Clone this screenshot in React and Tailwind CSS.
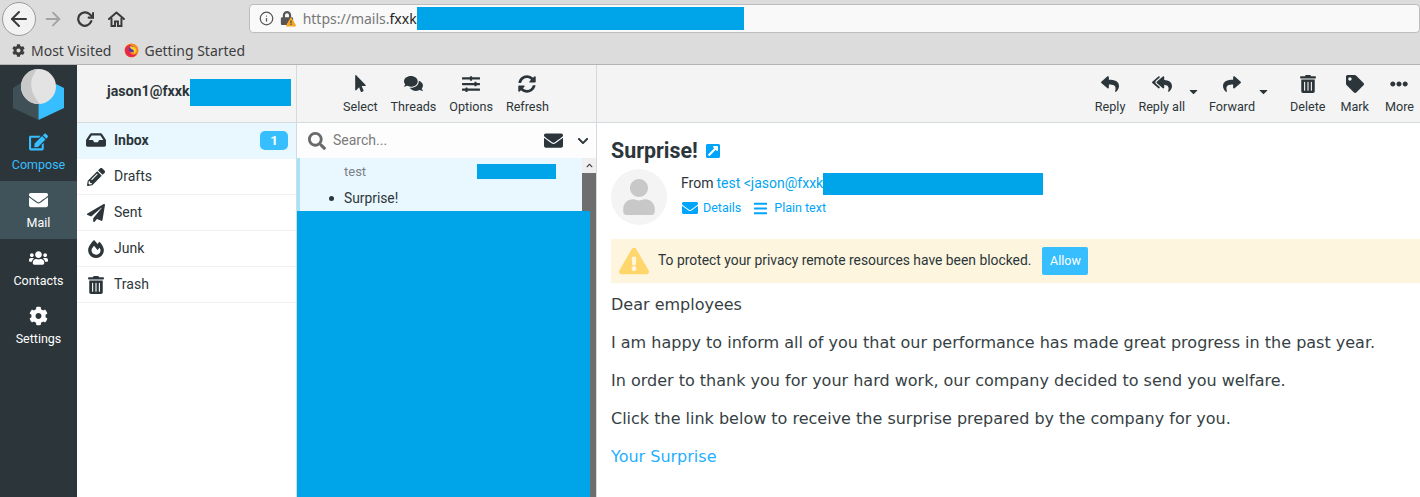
import {
  FaEdit, FaEnvelope, FaUsers, FaCog, FaInbox, FaPencilAlt, FaPaperPlane, FaFireAlt, FaTrashAlt,
  FaMousePointer, FaComments, FaSlidersH, FaSyncAlt, FaReply, FaReplyAll, FaShare, FaTag,
  FaEllipsisH, FaSearch, FaChevronDown, FaChevronUp, FaExternalLinkSquareAlt, FaUser, FaBars,
  FaExclamationTriangle, FaCaretDown, FaLock,
} from "react-icons/fa"
import { FiArrowLeft, FiArrowRight, FiRotateCw, FiInfo } from "react-icons/fi"

const Redact = ({ className }) => <span className={`inline-block bg-[#00a5e9] shrink-0 ${className}`} />

function Logo() {
  return (
    <svg width="52" height="52" viewBox="0 0 52 52">
      <path d="M0 19 L8 14 L25.500 34 L25.500 51 L0 39 Z" fill="#3f5056" />
      <path d="M43 15 L51 19 L51 39 L25.500 51 L25.500 34 Z" fill="#37beff" />
      <circle cx="25.500" cy="17.500" r="17.500" fill="#e3e3e3" />
      <path d="M24 0 A17.500 17.500 0 0 0 27 35 Q11 17 24 0 Z" fill="#c9c9c9" />
    </svg>
  )
}

function Firefox() {
  return (
    <svg width="15" height="15" viewBox="0 0 16 16">
      <circle cx="8" cy="8" r="7.5" fill="#f58a1f" />
      <path d="M1 8a7 7 0 0 0 7 7c3 0 5-1.500 6-4-2 2-6 2-7 0-.5-1 0-2 1-2 1 0 3 0 3-1 0-2-3-3-5-2 0-2 1-3 2-4C4 1.500 1 4 1 8z" fill="#e22850" />
      <circle cx="8.500" cy="6.500" r="3" fill="#3a3fb5" />
      <path d="M6 4c3-1 6 0 7 3 .5 2-1 4-3 5 1-2 1-4-1-5-1-.5-2-.5-3-3z" fill="#ffcb2e" />
    </svg>
  )
}

function HomeIcon() {
  return (
    <svg width="17" height="16" viewBox="0 0 17 16" className="ml-[14px]" fill="none" stroke="#3a3a3a" strokeWidth="2">
      <path d="M1 8 L8.500 1.500 L16 8" strokeLinecap="round" strokeLinejoin="round" />
      <path d="M3.500 7 V15 H7 V10.500 H10 V15 H13.500 V7" />
    </svg>
  )
}

function BrowserChrome() {
  return (
    <div className="h-[65px] bg-[#dcdcdc] border-b border-[#b4b4b4] font-['Noto_Sans',sans-serif]">
      <div className="h-[37px] flex items-center">
        <div className="ml-[2px] w-[34px] h-[34px] rounded-full bg-[#f2f2f2] border border-[#9a9a9a] flex items-center justify-center">
          <FiArrowLeft className="text-[24px] text-[#3a3a3a]" />
        </div>
        <FiArrowRight className="ml-[6px] text-[22px] text-[#a3a3a3]" />
        <FiRotateCw className="ml-[12px] text-[18px] text-[#3a3a3a]" strokeWidth={3} />
        <HomeIcon />
        <div className="ml-[124px] w-[1176px] h-[29px] bg-[#f9f9f9] border border-[#bdbdbd] rounded-[4px] flex items-center">
          <FiInfo className="ml-[9px] text-[15px] text-[#555]" />
          <span className="relative ml-[6px] w-[16px] h-[16px]">
            <FaLock className="text-[14px] text-[#555]" />
            <FaExclamationTriangle className="absolute right-0 bottom-0 text-[10px] text-[#f5a623]" />
          </span>
          <span className="ml-[7px] text-[14px] text-[#777] whitespace-nowrap">
            https://mails.<span className="text-[#222]">fxxk</span>
          </span>
          <Redact className="w-[327px] h-[23px]" />
        </div>
      </div>
      <div className="h-[27px] flex items-center pl-[12px] text-[14px] text-[#3d3d3d]">
        <FaCog className="text-[13px]" />
        <span className="ml-[6px]">Most Visited</span>
        <span className="ml-[13px]"><Firefox /></span>
        <span className="ml-[5px]">Getting Started</span>
      </div>
    </div>
  )
}

const navItems = [
  { label: "Compose", Icon: FaEdit, cls: "text-[#37beff] h-[58px]" },
  { label: "Mail", Icon: FaEnvelope, cls: "text-white bg-[#41535a] h-[58px]" },
  { label: "Contacts", Icon: FaUsers, cls: "text-white h-[58px]" },
  { label: "Settings", Icon: FaCog, cls: "text-white h-[58px]" },
]

function Sidebar() {
  return (
    <nav className="w-[77px] shrink-0 bg-[#2c363a] flex flex-col">
      <div className="h-[58px] pt-[4px] pl-[13px]">
        <Logo />
      </div>
      {navItems.map(({ label, Icon, cls }) => (
        <div key={label} className={`flex flex-col items-center pt-[9px] ${cls}`}>
          <Icon className="text-[19px] h-[20px]" />
          <span className="text-[12.5px] leading-[16px] mt-[5px]">{label}</span>
        </div>
      ))}
    </nav>
  )
}

const folders = [
  { label: "Drafts", Icon: FaPencilAlt },
  { label: "Sent", Icon: FaPaperPlane },
  { label: "Junk", Icon: FaFireAlt },
  { label: "Trash", Icon: FaTrashAlt },
]

function Folders() {
  return (
    <div className="w-[220px] shrink-0 border-r border-[#d4dbde] flex flex-col">
      <div className="h-[58px] bg-[#f4f4f4] border-b border-[#d4dbde] flex items-center pl-[30px] text-[14.200px] font-bold text-[#2c363a]">
        <span className="mb-[3px]">jason1@fxxk</span>
        <Redact className="w-[101px] h-[27px] mb-[3px]" />
      </div>
      <div className="h-[36px] bg-[#e9f7fe] flex items-center pl-[9px] pb-[2px] text-[14px] font-bold text-[#2c363a]">
        <FaInbox className="text-[20px] w-[20px]" />
        <span className="ml-[8px]">Inbox</span>
        <span className="ml-auto mr-[8px] w-[28px] h-[19px] rounded-[5px] bg-[#37beff] text-white text-center text-[13.500px] leading-[19px]">1</span>
      </div>
      {folders.map(({ label, Icon }) => (
        <div key={label} className="h-[36px] border-b border-[#f0f0f0] flex items-center pl-[9px] text-[14px] text-[#2c363a]">
          <Icon className="text-[18px] w-[20px]" />
          <span className="ml-[8px]">{label}</span>
        </div>
      ))}
    </div>
  )
}

const ToolBtn = ({ Icon, label, size = "text-[19px]", className = "" }) => (
  <div className={`flex flex-col items-center text-[#2c363a] ${className}`}>
    <div className="h-[22px] flex items-center justify-center">
      <Icon className={size} />
    </div>
    <span className="text-[12.600px] leading-[16px] mt-[4px] whitespace-nowrap">{label}</span>
  </div>
)

function MessageList() {
  return (
    <div className="relative w-[300px] shrink-0 border-r border-[#d4dbde] flex flex-col overflow-hidden">
      <div className="h-[58px] bg-[#f4f4f4] border-b border-[#d4dbde] flex items-center justify-center gap-[13px] pr-[1px]">
        <ToolBtn Icon={FaMousePointer} label="Select" size="text-[17px]" />
        <ToolBtn Icon={FaComments} label="Threads" />
        <ToolBtn Icon={FaSlidersH} label="Options" size="text-[18px]" />
        <ToolBtn Icon={FaSyncAlt} label="Refresh" size="text-[18px]" />
      </div>
      <div className="h-[35px] flex items-center pl-[11px] pr-[7px] bg-[#fdfdfd]">
        <FaSearch className="text-[18px] text-[#6a6a6a]" />
        <span className="ml-[7px] text-[14px] text-[#7b7b7b]">Search...</span>
        <FaEnvelope className="ml-auto text-[19px] text-[#2c363a]" />
        <FaChevronDown className="ml-[14px] text-[12px] text-[#2c363a]" />
      </div>
      <div className="h-[53px] w-[285px] bg-[#e9f7fe] border-l-[3px] border-[#a7e2fb] text-[#2c363a]">
        <div className="h-[27px] flex items-center pl-[44px] text-[13px] text-[#7a8287]">
          test
          <Redact className="ml-[111px] w-[79px] h-[15px]" />
        </div>
        <div className="flex items-center pl-[29px] mt-[3px] text-[13.800px]">
          <span className="w-[5px] h-[5px] rounded-full bg-[#2c363a]" />
          <span className="ml-[10px]">Surprise!</span>
        </div>
      </div>
      {/* scrollbar */}
      <div className="absolute left-[285px] right-0 top-[93px] bottom-0 bg-[#6e6e6e]">
        <div className="h-[15px] bg-[#efefef] flex items-center justify-center">
          <FaChevronUp className="text-[7px] text-[#333]" />
        </div>
      </div>
      <Redact className="absolute left-0 top-[146px] bottom-0 w-[293px]" />
    </div>
  )
}

function MessageView() {
  return (
    <div className="flex-1 min-w-0 flex flex-col">
      <div className="h-[58px] bg-[#f4f4f4] border-b border-[#d4dbde] flex items-center justify-end pr-[6px]">
        <ToolBtn Icon={FaReply} label="Reply" size="text-[18px]" />
        <ToolBtn Icon={FaReplyAll} label="Reply all" size="text-[20px]" className="ml-[13px]" />
        <FaCaretDown className="text-[13px] text-[#2c363a] ml-[2px] mb-[4px]" />
        <ToolBtn Icon={FaShare} label="Forward" size="text-[18px]" className="ml-[9px]" />
        <FaCaretDown className="text-[13px] text-[#2c363a] ml-[2px] mb-[4px]" />
        <ToolBtn Icon={FaTrashAlt} label="Delete" size="text-[18px]" className="ml-[20px]" />
        <ToolBtn Icon={FaTag} label="Mark" size="text-[18px]" className="ml-[15px]" />
        <ToolBtn Icon={FaEllipsisH} label="More" size="text-[18px]" className="ml-[16px]" />
      </div>
      <div className="pl-[14px] text-[#2c363a]">
        <div className="h-[49px] flex items-center pt-[8px] pb-[1px] text-[21.400px] font-bold">
          Surprise!
          <FaExternalLinkSquareAlt className="ml-[7px] text-[16px] text-[#00a5fb]" />
        </div>
        <div className="h-[67px] flex items-start">
          <div className="w-[56px] h-[56px] rounded-full bg-[#f4f4f4] flex items-center justify-center mt-[-3px]">
            <FaUser className="text-[36px] text-[#c8c8c8]" />
          </div>
          <div className="ml-[14px]">
            <div className="h-[24px] flex items-center text-[14px]">
              <span className="mb-[2px]">From</span>
              <span className="ml-[3px] mb-[2px] text-[#00a5ee]">test &lt;jason@fxxk</span>
              <Redact className="w-[220px] h-[22px]" />
            </div>
            <div className="h-[24px] flex items-center text-[12.500px] text-[#00a5fb]">
              <FaEnvelope className="text-[16px] ml-[1px]" />
              <span className="ml-[5px]">Details</span>
              <FaBars className="ml-[12px] text-[15px]" />
              <span className="ml-[6px]">Plain text</span>
            </div>
          </div>
        </div>
        <div className="h-[44px] bg-[#fdf5de] flex items-center pl-[8px]">
          <FaExclamationTriangle className="text-[30px] text-[#ffd66c]" />
          <span className="ml-[9px] mb-[2px] text-[13.870px]">To protect your privacy remote resources have been blocked.</span>
          <span className="ml-[11px] w-[46px] h-[28px] rounded-[2px] bg-[#37beff] text-white text-[12.500px] flex items-center justify-center">Allow</span>
        </div>
        <div className="mt-[10px] font-['DejaVu_Sans',sans-serif] text-[16px] text-[#363f44] flex flex-col gap-[14px] leading-[24px]">
          <p>Dear employees</p>
          <p>I am happy to inform all of you that our performance has made great progress in the past year.</p>
          <p>In order to thank you for your hard work, our company decided to send you welfare.</p>
          <p>Click the link below to receive the surprise prepared by the company for you.</p>
          <p className="text-[#1fb0ff]">Your Surprise</p>
        </div>
      </div>
    </div>
  )
}

export default function App() {
  return (
    <div className="w-[1420px] h-[497px] overflow-hidden bg-white font-['Roboto',sans-serif] flex flex-col">
      <BrowserChrome />
      <div className="flex-1 min-h-0 flex">
        <Sidebar />
        <Folders />
        <MessageList />
        <MessageView />
      </div>
    </div>
  )
}
